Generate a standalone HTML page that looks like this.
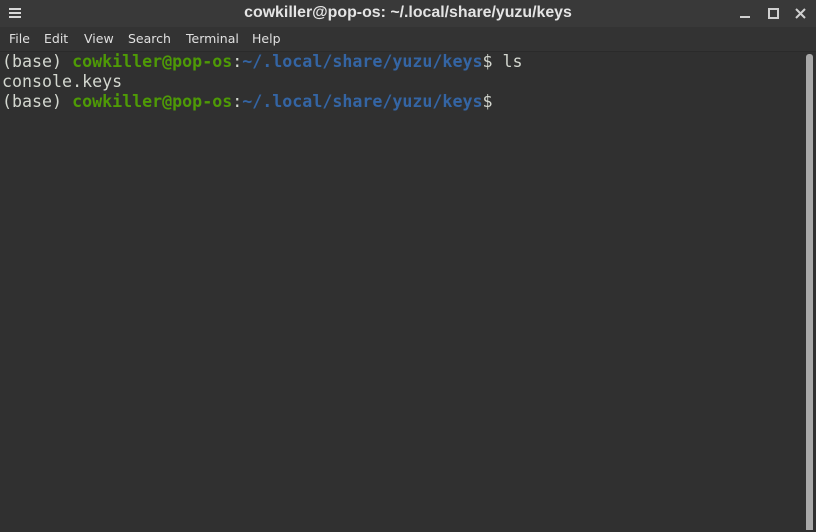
<!DOCTYPE html>
<html><head><meta charset="utf-8"><style>
html,body{margin:0;padding:0;width:816px;height:532px;overflow:hidden;background:#303030;}
.title{position:absolute;left:0;top:0;width:816px;height:27px;background:#393939;font-family:"Liberation Sans","DejaVu Sans",sans-serif;}
.title .t{position:absolute;left:0;right:0;top:4px;text-align:center;color:#e4e4e4;font-weight:bold;font-size:15.9px;}
.menu{position:absolute;left:0;top:27px;width:816px;height:24px;background:#333333;border-bottom:1px solid #2a2a2a;font-family:"DejaVu Sans",sans-serif;font-size:12.5px;color:#e0e0e0;}
.menu span{position:absolute;top:4px;}
.term{position:absolute;left:0;top:52px;width:806px;height:480px;background:#303030;font-family:"DejaVu Sans Mono",monospace;font-size:16.64px;color:#d3d7cf;}
.l{position:absolute;left:2px;white-space:pre;line-height:20px;}
.g{color:#4e9a06;font-weight:bold}.b{color:#3465a4;font-weight:bold}
.sb{position:absolute;left:806px;top:54px;width:7px;height:476px;background:#a8a8a8;border-radius:3px 3px 0 0;}
</style></head><body>
<div class="title">
<svg style="position:absolute;left:9px;top:8px" width="12" height="10"><rect y="0" width="12" height="2" fill="#d8d8d8"/><rect y="4" width="12" height="2" fill="#d8d8d8"/><rect y="8" width="12" height="2" fill="#d8d8d8"/></svg>
<div class="t">cowkiller@pop-os: ~/.local/share/yuzu/keys</div>
<svg style="position:absolute;left:740px;top:8px" width="70" height="12">
<rect x="0" y="8" width="10" height="2" fill="#d0d0d0"/>
<rect x="29" y="1" width="9" height="9" fill="none" stroke="#d0d0d0" stroke-width="2"/>
<path d="M56 1 L65 10 M65 1 L56 10" stroke="#d0d0d0" stroke-width="2"/>
</svg>
</div>
<div class="menu"><span style="left:9px">File</span><span style="left:44px">Edit</span><span style="left:84px">View</span><span style="left:128px">Search</span><span style="left:186px">Terminal</span><span style="left:252px">Help</span></div>
<div class="term">
<div class="l" style="top:0px">(base) <span class="g">cowkiller@pop-os</span>:<span class="b">~/.local/share/yuzu/keys</span>$ ls</div>
<div class="l" style="top:20px">console.keys</div>
<div class="l" style="top:40px">(base) <span class="g">cowkiller@pop-os</span>:<span class="b">~/.local/share/yuzu/keys</span>$ </div>
</div>
<div class="sb"></div>
</body></html>
